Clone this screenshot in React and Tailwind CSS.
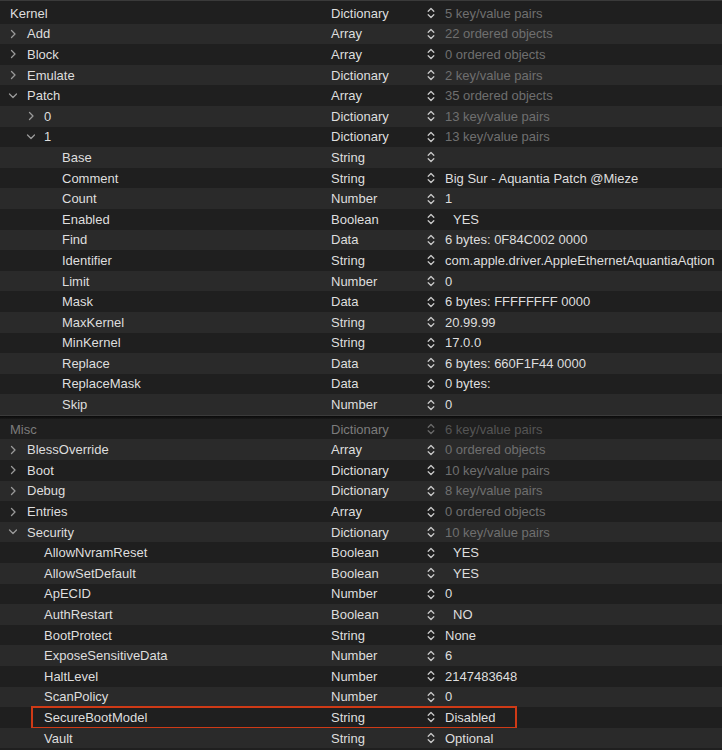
import React from "react";

const top = [
  { k: "Kernel", lvl: 0, root: true, t: "Dictionary", v: "5 key/value pairs", dim: true },
  { k: "Add", lvl: 1, ch: "r", t: "Array", v: "22 ordered objects", dim: true },
  { k: "Block", lvl: 1, ch: "r", t: "Array", v: "0 ordered objects", dim: true },
  { k: "Emulate", lvl: 1, ch: "r", t: "Dictionary", v: "2 key/value pairs", dim: true },
  { k: "Patch", lvl: 1, ch: "d", t: "Array", v: "35 ordered objects", dim: true },
  { k: "0", lvl: 2, ch: "r", t: "Dictionary", v: "13 key/value pairs", dim: true },
  { k: "1", lvl: 2, ch: "d", t: "Dictionary", v: "13 key/value pairs", dim: true },
  { k: "Base", lvl: 3, t: "String", v: "" },
  { k: "Comment", lvl: 3, t: "String", v: "Big Sur - Aquantia Patch @Mieze" },
  { k: "Count", lvl: 3, t: "Number", v: "1" },
  { k: "Enabled", lvl: 3, t: "Boolean", v: "YES", bool: true },
  { k: "Find", lvl: 3, t: "Data", v: "6 bytes: 0F84C002 0000" },
  { k: "Identifier", lvl: 3, t: "String", v: "com.apple.driver.AppleEthernetAquantiaAqtion" },
  { k: "Limit", lvl: 3, t: "Number", v: "0" },
  { k: "Mask", lvl: 3, t: "Data", v: "6 bytes: FFFFFFFF 0000" },
  { k: "MaxKernel", lvl: 3, t: "String", v: "20.99.99" },
  { k: "MinKernel", lvl: 3, t: "String", v: "17.0.0" },
  { k: "Replace", lvl: 3, t: "Data", v: "6 bytes: 660F1F44 0000" },
  { k: "ReplaceMask", lvl: 3, t: "Data", v: "0 bytes:" },
  { k: "Skip", lvl: 3, t: "Number", v: "0" },
];

const bottom = [
  { k: "Misc", lvl: 0, root: true, t: "Dictionary", v: "6 key/value pairs", dim: true, faded: true },
  { k: "BlessOverride", lvl: 1, ch: "r", t: "Array", v: "0 ordered objects", dim: true },
  { k: "Boot", lvl: 1, ch: "r", t: "Dictionary", v: "10 key/value pairs", dim: true },
  { k: "Debug", lvl: 1, ch: "r", t: "Dictionary", v: "8 key/value pairs", dim: true },
  { k: "Entries", lvl: 1, ch: "r", t: "Array", v: "0 ordered objects", dim: true },
  { k: "Security", lvl: 1, ch: "d", t: "Dictionary", v: "10 key/value pairs", dim: true },
  { k: "AllowNvramReset", lvl: 2, t: "Boolean", v: "YES", bool: true },
  { k: "AllowSetDefault", lvl: 2, t: "Boolean", v: "YES", bool: true },
  { k: "ApECID", lvl: 2, t: "Number", v: "0" },
  { k: "AuthRestart", lvl: 2, t: "Boolean", v: "NO", bool: true },
  { k: "BootProtect", lvl: 2, t: "String", v: "None" },
  { k: "ExposeSensitiveData", lvl: 2, t: "Number", v: "6" },
  { k: "HaltLevel", lvl: 2, t: "Number", v: "2147483648" },
  { k: "ScanPolicy", lvl: 2, t: "Number", v: "0" },
  { k: "SecureBootModel", lvl: 2, t: "String", v: "Disabled", hl: true },
  { k: "Vault", lvl: 2, t: "String", v: "Optional" },
];

function ChevronRight() {
  return (
    <svg width="7" height="10" viewBox="0 0 7 10" className="shrink-0">
      <path d="M1.5 1.5 L5 5 L1.5 8.5" fill="none" stroke="#9a9a9a" strokeWidth="1.3" strokeLinecap="round" strokeLinejoin="round" />
    </svg>
  );
}

function ChevronDown() {
  return (
    <svg width="10" height="7" viewBox="0 0 10 7" className="shrink-0">
      <path d="M1.5 1.5 L5 5 L8.5 1.5" fill="none" stroke="#9a9a9a" strokeWidth="1.3" strokeLinecap="round" strokeLinejoin="round" />
    </svg>
  );
}

function Stepper({ faded }) {
  const c = faded ? "#6a6a6a" : "#c9c9c9";
  return (
    <svg width="8" height="12" viewBox="0 0 8 12" className="shrink-0">
      <path d="M1.2 4.3 L4 1.5 L6.8 4.3" fill="none" stroke={c} strokeWidth="1.3" strokeLinecap="round" strokeLinejoin="round" />
      <path d="M1.2 7.7 L4 10.5 L6.8 7.7" fill="none" stroke={c} strokeWidth="1.3" strokeLinecap="round" strokeLinejoin="round" />
    </svg>
  );
}

function Row({ r, i }) {
  const bg = i % 2 === 0 ? "bg-[#1f1f1f]" : "bg-[#2a2a2a]";
  const textC = r.faded ? "text-[#7c7c7c]" : "text-[#dedede]";
  const keyPad = r.root
    ? "pl-[10px]"
    : r.lvl === 1
    ? "pl-[27px]"
    : r.lvl === 2
    ? "pl-[44px]"
    : "pl-[62px]";
  return (
    <div className={`relative flex h-[20.6px] items-center ${bg}`}>
      <div className={`relative flex w-[331px] shrink-0 items-center ${keyPad} ${textC}`}>
        {r.ch === "r" && (
          <span className={`absolute top-1/2 -translate-y-1/2 ${r.lvl === 1 ? "left-[10px]" : "left-[28px]"}`}>
            <ChevronRight />
          </span>
        )}
        {r.ch === "d" && (
          <span className={`absolute top-1/2 -translate-y-1/2 ${r.lvl === 1 ? "left-[8px]" : "left-[26px]"}`}>
            <ChevronDown />
          </span>
        )}
        <span className="leading-none">{r.k}</span>
      </div>
      <div className={`w-[96px] shrink-0 leading-none ${textC}`}>{r.t}</div>
      <div className="flex items-center">
        <Stepper faded={r.faded} />
        <span
          className={`leading-none whitespace-nowrap ${r.bool ? "pl-[18px]" : "pl-[10px]"} ${
            r.dim ? (r.faded ? "text-[#555555]" : "text-[#6f6f6f]") : "text-[#dedede]"
          }`}
        >
          {r.v}
        </span>
      </div>
      {r.hl && (
        <div className="pointer-events-none absolute left-[31px] top-[-1px] h-[23px] w-[486px] border-2 border-[#cf3a16]" />
      )}
    </div>
  );
}

export default function App() {
  return (
    <div
      className="h-[750px] w-[722px] overflow-hidden bg-[#1f1f1f] text-[13px]"
      style={{ fontFamily: '"Liberation Sans", Arial, sans-serif' }}
    >
      <div className="h-px bg-[#3a3a3a]" />
      <div className="pt-[2px] bg-[#1f1f1f]">
        {top.map((r, i) => (
          <Row key={"t" + i} r={r} i={i} />
        ))}
      </div>
      <div className="h-px bg-[#3b3b3b]" />
      <div className="h-[3px] bg-gradient-to-b from-[#0a0a0a] to-[#191919]" />
      <div>
        {bottom.map((r, i) => (
          <Row key={"b" + i} r={r} i={i} />
        ))}
      </div>
    </div>
  );
}
